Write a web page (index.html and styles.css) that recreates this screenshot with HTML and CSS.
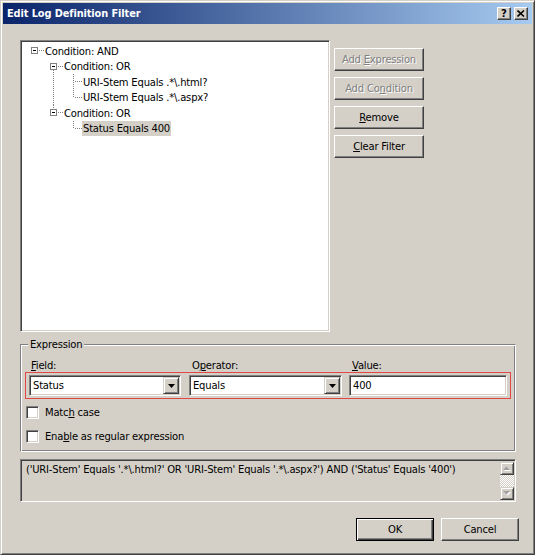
FILE: index.html
```html
<!DOCTYPE html>
<html>
<head>
<meta charset="utf-8">
<title>Edit Log Definition Filter</title>
<link rel="stylesheet" href="styles.css">
</head>
<body>
<div class="window">
  <div class="titlebar">
    <span class="title">Edit Log Definition Filter</span>
    <div class="caption-btns">
      <span class="cap-btn">?</span>
      <span class="cap-btn"><svg width="8" height="7" viewBox="0 0 8 7"><path d="M0.5 0.5L7 6.5M7 0.5L0.5 6.5" stroke="#000" stroke-width="1.6"/></svg></span>
    </div>
  </div>
  <div class="client">
    <div class="top">
      <div class="tree">
        <div class="row r16">
          <svg class="gut" width="22" height="16"><rect x="9.5" y="4.5" width="6" height="6" fill="#fff" stroke="#808080"/><path d="M11 7.5h3" stroke="#000"/><path d="M17 7.5h5" stroke="#808080" stroke-dasharray="1 1"/></svg>
          <span class="node">Condition: AND</span>
        </div>
        <div class="row r15">
          <svg class="gut" width="41" height="15"><path d="M31.5 11V15" stroke="#808080" stroke-dasharray="1 1"/><rect x="28.5" y="4.5" width="6" height="6" fill="#fff" stroke="#808080"/><path d="M30 7.5h3" stroke="#000"/><path d="M36 7.5h5" stroke="#808080" stroke-dasharray="1 1"/></svg>
          <span class="node">Condition: OR</span>
        </div>
        <div class="row r16">
          <svg class="gut" width="60" height="16"><path d="M31.5 0V16M51.5 0V16M53 7.5h7" stroke="#808080" stroke-dasharray="1 1"/></svg>
          <span class="node">URI-Stem Equals .*\.html?</span>
        </div>
        <div class="row r15">
          <svg class="gut" width="60" height="15"><path d="M31.5 0V15M51.5 0V8M53 7.5h7" stroke="#808080" stroke-dasharray="1 1"/></svg>
          <span class="node">URI-Stem Equals .*\.aspx?</span>
        </div>
        <div class="row r16">
          <svg class="gut" width="41" height="16"><path d="M31.5 0V4" stroke="#808080" stroke-dasharray="1 1"/><rect x="28.5" y="4.5" width="6" height="6" fill="#fff" stroke="#808080"/><path d="M30 7.5h3" stroke="#000"/><path d="M36 7.5h5" stroke="#808080" stroke-dasharray="1 1"/></svg>
          <span class="node">Condition: OR</span>
        </div>
        <div class="row r15">
          <svg class="gut" width="60" height="15"><path d="M51.5 0V8M53 7.5h7" stroke="#808080" stroke-dasharray="1 1"/></svg>
          <span class="node sel">Status Equals 400</span>
        </div>
      </div>
      <div class="side">
        <button class="btn side-btn disabled"><span>Add <u>E</u>xpression</span></button>
        <button class="btn side-btn disabled"><span>Add Co<u>n</u>dition</span></button>
        <button class="btn side-btn"><span><u>R</u>emove</span></button>
        <button class="btn side-btn"><span><u>C</u>lear Filter</span></button>
      </div>
    </div>

    <fieldset class="group">
      <legend class="legend">Expression</legend>
      <div class="labels">
        <span class="lbl lbl-field"><u>F</u>ield:</span>
        <span class="lbl lbl-op">O<u>p</u>erator:</span>
        <span class="lbl lbl-val"><u>V</u>alue:</span>
      </div>
      <div class="hl">
        <div class="combo c-field">
          <span class="combo-text">Status</span>
          <span class="drop"><svg width="7" height="4" viewBox="0 0 7 4"><path d="M0 0h7L3.5 4z" fill="#000"/></svg></span>
        </div>
        <div class="combo c-op">
          <span class="combo-text">Equals</span>
          <span class="drop"><svg width="7" height="4" viewBox="0 0 7 4"><path d="M0 0h7L3.5 4z" fill="#000"/></svg></span>
        </div>
        <div class="combo c-val">
          <span class="combo-text">400</span>
        </div>
      </div>
      <div class="check first">
        <span class="cb"></span>
        <span>Matc<u>h</u> case</span>
      </div>
      <div class="check second">
        <span class="cb"></span>
        <span>Ena<u>b</u>le as regular expression</span>
      </div>
    </fieldset>

    <div class="summary">
      <div class="summary-text">('URI-Stem' Equals '.*\.html?' OR 'URI-Stem' Equals '.*\.aspx?') AND ('Status' Equals '400')</div>
      <div class="vscroll">
        <span class="sb-btn"><svg width="8" height="5" viewBox="0 0 8 5"><path d="M1 5h7L4.5 1.5z" fill="#fff"/><path d="M0 4h7L3.5 0.5z" fill="#a0a0a0"/></svg></span>
        <span class="sb-track"></span>
        <span class="sb-btn"><svg width="8" height="5" viewBox="0 0 8 5"><path d="M1 1h7L4.5 4.5z" fill="#fff"/><path d="M0 0h7L3.5 3.5z" fill="#a0a0a0"/></svg></span>
      </div>
    </div>

    <div class="actions">
      <button class="btn act default"><span>OK</span></button>
      <button class="btn act"><span>Cancel</span></button>
    </div>
  </div>
</div>
</body>
</html>
```

FILE: styles.css
```css
html, body {
  margin: 0;
  background: #fff;
}
body {
  font-family: "DejaVu Sans", "Liberation Sans", sans-serif;
  font-size: 10px;
  letter-spacing: -0.2px;
  color: #000;
}
.window {
  box-sizing: border-box;
  width: 535px;
  height: 555px;
  background: #d4d0c8;
  border: 1px solid;
  border-color: #d4d0c8 #404040 #404040 #d4d0c8;
  box-shadow: inset 1px 1px #fff, inset -1px -1px #808080;
  padding: 2px;
  display: flex;
  flex-direction: column;
}
.titlebar {
  height: 21px;
  flex: none;
  background: linear-gradient(to right, #0a246a, #a6caf0);
  display: flex;
  align-items: center;
  padding: 0 4px 0 4px;
}
.title {
  flex: 1;
  color: #fff;
  font-weight: bold;
  font-size: 9.8px;
  letter-spacing: -0.1px;
  white-space: nowrap;
}
.caption-btns {
  display: flex;
  gap: 3px;
}
.cap-btn {
  box-sizing: border-box;
  width: 14px;
  height: 13px;
  background: #d4d0c8;
  border: 1px solid;
  border-color: #fff #404040 #404040 #fff;
  box-shadow: inset -1px -1px #808080;
  display: flex;
  align-items: center;
  justify-content: center;
  font-weight: bold;
  font-size: 10px;
  line-height: 1;
  letter-spacing: 0;
}
.cap-btn svg { display: block; }
.client {
  flex: 1;
  padding: 16px 16px 0 17px;
  display: flex;
  flex-direction: column;
}
.top {
  display: flex;
  gap: 4px;
  align-items: flex-start;
}
.tree {
  box-sizing: border-box;
  width: 310px;
  height: 292px;
  background: #fff;
  border: 1px solid;
  border-color: #808080 #fff #fff #808080;
  box-shadow: inset 1px 1px #404040, inset -1px -1px #d4d0c8;
  padding: 2px 1px 0 1px;
}
.row {
  display: flex;
  align-items: center;
}
.r16 { height: 16px; }
.r15 { height: 15px; }
.gut {
  display: block;
  flex: none;
  shape-rendering: crispEdges;
}
.node {
  padding: 0 1px;
  white-space: nowrap;
  line-height: 13px;
}
.node.sel {
  align-self: stretch;
  display: flex;
  align-items: center;
  background: #d4d0c8;
}
.side {
  display: flex;
  flex-direction: column;
  gap: 6px;
  padding-top: 8px;
}
.btn {
  box-sizing: border-box;
  height: 23px;
  padding: 0;
  margin: 0;
  font: inherit;
  letter-spacing: inherit;
  color: #000;
  background: #d4d0c8;
  border: 1px solid;
  border-color: #fff #404040 #404040 #fff;
  box-shadow: inset -1px -1px #808080;
  display: flex;
  align-items: center;
  justify-content: center;
  white-space: nowrap;
}
.side-btn { width: 90px; }
.btn.disabled {
  color: #808080;
  text-shadow: 1px 1px #fff;
}
.group {
  margin: 6px 0 0;
  padding: 8px 4px 8px 4px;
  border: 1px solid;
  border-color: #808080 #fff #fff #808080;
  box-shadow: inset 1px 1px #fff, inset -1px -1px #808080;
  min-width: 0;
}
.legend {
  padding: 0 2px;
  margin-left: 3px;
  line-height: 13px;
  background: #d4d0c8;
}
.labels {
  display: flex;
  padding-left: 4px;
  line-height: 13px;
  height: 13px;
}
.lbl { box-sizing: border-box; }
.lbl-field { width: 160px; padding-left: 2px; }
.lbl-op { width: 160px; padding-left: 3px; }
.lbl-val { padding-left: 3px; }
.hl {
  border: 1px solid #e04848;
  padding: 2px 3px;
  display: flex;
}
.combo {
  box-sizing: border-box;
  height: 21px;
  background: #fff;
  border: 1px solid;
  border-color: #808080 #fff #fff #808080;
  box-shadow: inset 1px 1px #404040, inset -1px -1px #d4d0c8;
  padding: 1px;
  display: flex;
  align-items: center;
}
.c-field { width: 152px; margin-right: 8px; }
.c-op { width: 153px; margin-right: 7px; }
.c-val { width: 158px; }
.combo-text {
  flex: 1;
  padding-left: 2px;
  white-space: nowrap;
}
.drop {
  box-sizing: border-box;
  width: 16px;
  height: 17px;
  background: #d4d0c8;
  border: 1px solid;
  border-color: #d4d0c8 #404040 #404040 #d4d0c8;
  box-shadow: inset 1px 1px #fff, inset -1px -1px #808080;
  display: flex;
  align-items: center;
  justify-content: center;
}
.drop svg { display: block; }
.check {
  display: flex;
  align-items: center;
  gap: 6px;
  height: 13px;
  margin-left: 1px;
}
.check.first { margin-top: 7px; }
.check.second { margin-top: 11px; }
.cb {
  box-sizing: border-box;
  width: 13px;
  height: 13px;
  background: #fff;
  border: 1px solid;
  border-color: #808080 #fff #fff #808080;
  box-shadow: inset 1px 1px #404040, inset -1px -1px #d4d0c8;
}
.summary {
  box-sizing: border-box;
  margin-top: 7px;
  height: 43px;
  background: #d4d0c8;
  border: 1px solid;
  border-color: #808080 #fff #fff #808080;
  box-shadow: inset 1px 1px #404040, inset -1px -1px #d4d0c8;
  display: flex;
}
.summary-text {
  flex: 1;
  padding: 2.5px 4px 0 5px;
  line-height: 13px;
  white-space: nowrap;
}
.vscroll {
  width: 14px;
  margin: 2px 1px 1px 0;
  display: flex;
  flex-direction: column;
}
.sb-btn {
  box-sizing: border-box;
  height: 13px;
  flex: none;
  background: #d4d0c8;
  border: 1px solid;
  border-color: #d4d0c8 #404040 #404040 #d4d0c8;
  box-shadow: inset 1px 1px #fff, inset -1px -1px #808080;
  display: flex;
  align-items: center;
  justify-content: center;
}
.sb-btn svg { display: block; }
.sb-track {
  flex: 1;
  background: conic-gradient(#fff 25%, #d4d0c8 0 50%, #fff 0 75%, #d4d0c8 0) 0 0 / 2px 2px;
}
.actions {
  display: flex;
  justify-content: flex-end;
  gap: 7px;
  margin-top: 16px;
  margin-right: -3px;
}
.act { width: 78px; }
.btn.default {
  border: 1px solid #000;
  box-shadow: inset 1px 1px #fff, inset -1px -1px #404040, inset -2px -2px #808080;
}
```
